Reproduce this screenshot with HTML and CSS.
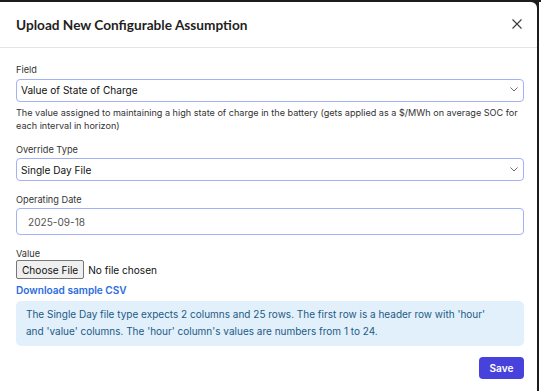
FILE: index.html
```html
<!DOCTYPE html>
<html lang="en">
<head>
<meta charset="utf-8">
<title>Upload New Configurable Assumption</title>
<link rel="stylesheet" href="styles.css">
</head>
<body>
<div class="backdrop">
  <div class="modal">
    <header class="modal-header">
      <h2 class="modal-title">Upload New Configurable Assumption</h2>
      <button class="close-btn" aria-label="Close">
        <svg width="10" height="10" viewBox="0 0 10 10"><path d="M0.5 0.5 L9.5 9.5 M9.5 0.5 L0.5 9.5" stroke="#3a3a3a" stroke-width="1.1" fill="none"/></svg>
      </button>
    </header>
    <div class="modal-body">
      <div class="field">
        <label class="label">Field</label>
        <div class="select-wrap">
          <select class="control select"><option>Value of State of Charge</option></select>
          <svg class="chevron" width="8" height="5" viewBox="0 0 8 5"><path d="M0.5 0.5 L4 4 L7.5 0.5" stroke="#6b6b6b" stroke-width="1" fill="none"/></svg>
        </div>
        <p class="help">The value assigned to maintaining a high state of charge in the battery (gets applied as a $/MWh on average SOC for each interval in horizon)</p>
      </div>
      <div class="field field-after-help">
        <label class="label">Override Type</label>
        <div class="select-wrap">
          <select class="control select"><option>Single Day File</option></select>
          <svg class="chevron" width="8" height="5" viewBox="0 0 8 5"><path d="M0.5 0.5 L4 4 L7.5 0.5" stroke="#6b6b6b" stroke-width="1" fill="none"/></svg>
        </div>
      </div>
      <div class="field field-spaced">
        <label class="label">Operating Date</label>
        <input class="control date" type="text" value="2025-09-18">
      </div>
      <div class="field field-value">
        <label class="label label-tight">Value</label>
        <div class="file-row">
          <button class="file-btn">Choose File</button>
          <span class="file-name">No file chosen</span>
        </div>
        <a class="sample-link" href="#">Download sample CSV</a>
        <div class="info">The Single Day file type expects 2 columns and 25 rows. The first row is a header row with 'hour' and 'value' columns. The 'hour' column's values are numbers from 1 to 24.</div>
      </div>
      <div class="footer">
        <button class="save-btn">Save</button>
      </div>
    </div>
  </div>
</div>
</body>
</html>
```
FILE: styles.css
```css
* { box-sizing: border-box; }
html, body { margin: 0; padding: 0; }
body {
  width: 541px;
  height: 391px;
  overflow: hidden;
  background: #fff;
  border-top: 2px solid #1c1c1c;
  font-family: Inter, "Noto Sans", sans-serif;
  color: #1a1a1a;
}
.backdrop {
  width: 539px;
  height: 389px;
  background: #1c1c1c;
}
.modal {
  width: 537px;
  height: 389px;
  background: #fff;
  border-top-right-radius: 6px;
}
.modal-header {
  height: 46px;
  display: flex;
  align-items: center;
  justify-content: space-between;
  padding: 0 15px 0 16px;
  border-bottom: 1px solid #e4e4e4;
}
.modal-title {
  margin: 0;
  font-family: Lato, "Liberation Sans", sans-serif;
  font-weight: 700;
  font-size: 13.65px;
  color: #1f1f1f;
}
.close-btn {
  border: 0;
  background: none;
  padding: 0;
  width: 10px;
  height: 10px;
  display: flex;
  margin-bottom: 2px;
}
.modal-body {
  padding: 15px 13px 0 16px;
}
.field { display: flex; flex-direction: column; }
.field-after-help { margin-top: 10px; }
.field-spaced { margin-top: 12px; }
.field-value { margin-top: 12px; }
.label {
  font-size: 9.2px;
  line-height: 13px;
  color: #333;
  margin-bottom: 2px;
}
.label-tight { margin-bottom: 0; }
.control {
  width: 100%;
  border: 1px solid #a3b1f7;
  border-radius: 4px;
  background: #fff;
  font-family: Inter, "Noto Sans", sans-serif;
  font-size: 10.1px;
  color: #111;
  outline: none;
}
.select-wrap { position: relative; }
.select {
  appearance: none;
  -webkit-appearance: none;
  height: 23px;
  padding: 0 20px 0 4px;
}
.chevron {
  position: absolute;
  right: 6px;
  top: 9px;
}
.help {
  margin: 4px 0 0;
  font-size: 9.1px;
  line-height: 13.5px;
  color: #333;
}
.date {
  height: 27px;
  padding: 0 11px;
  color: #555;
}
.file-row {
  display: flex;
  align-items: center;
  gap: 4px;
  height: 19px;
}
.file-btn {
  height: 19px;
  padding: 0 5px;
  border: 1px solid #767676;
  border-radius: 2px;
  background: #efefef;
  font-family: Inter, "Noto Sans", sans-serif;
  font-size: 10.1px;
  color: #111;
}
.file-name {
  font-size: 10.1px;
  color: #111;
}
.sample-link {
  margin-top: 4px;
  font-size: 10.1px;
  line-height: 14px;
  font-weight: 600;
  color: #2a6ce0;
  text-decoration: none;
}
.info {
  margin-top: 4px;
  padding: 5px 24px 7px 10px;
  background: #e1f0fb;
  border-radius: 5px;
  font-size: 10px;
  line-height: 16.5px;
  color: #245a84;
}
.footer {
  display: flex;
  justify-content: flex-end;
  margin-top: 11px;
}
.save-btn {
  width: 45px;
  height: 22px;
  border: 0;
  border-radius: 4px;
  background: #4842dc;
  color: #fff;
  font-family: Inter, "Noto Sans", sans-serif;
  font-size: 10.1px;
  font-weight: 600;
}
```
